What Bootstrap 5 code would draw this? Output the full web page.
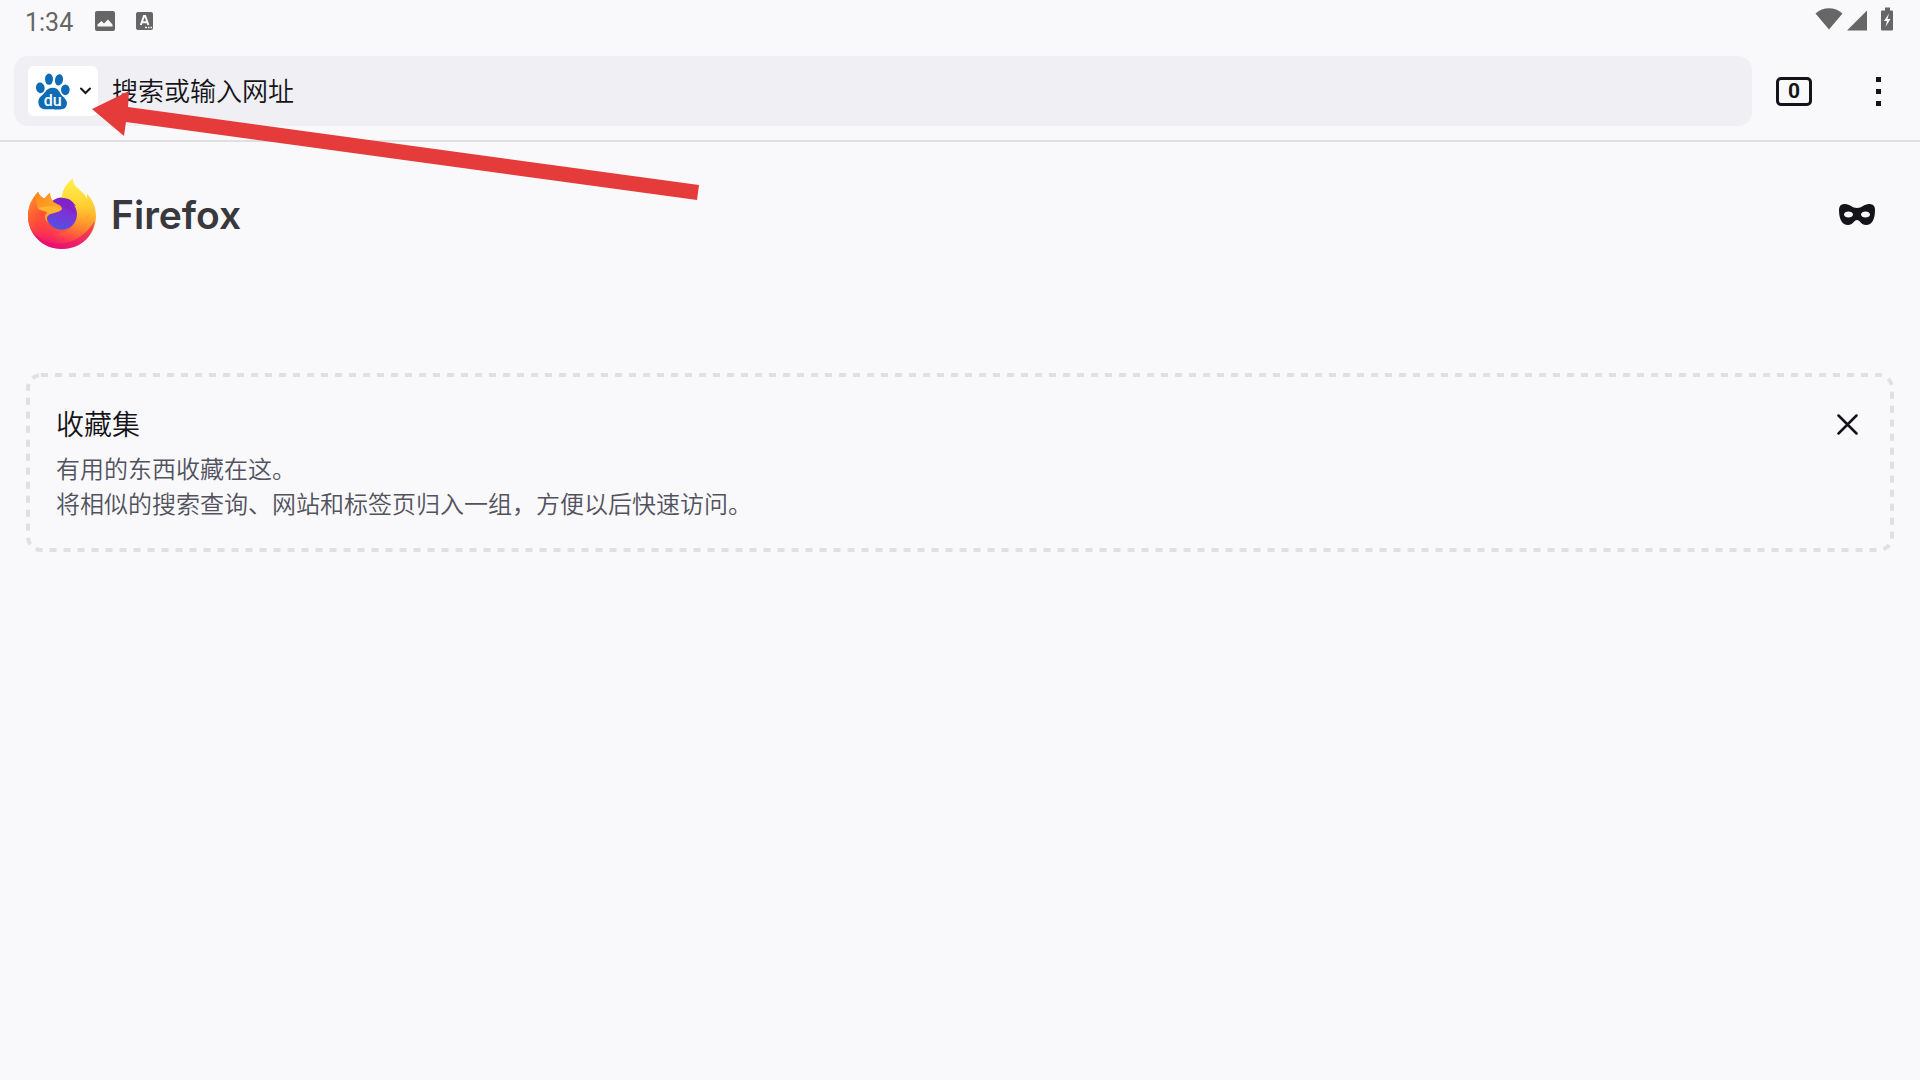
<!DOCTYPE html>
<html lang="zh-CN">
<head>
<meta charset="utf-8">
<meta name="viewport" content="width=device-width, initial-scale=1">
<title>Firefox</title>
<link href="https://cdn.jsdelivr.net/npm/bootstrap@5.3.0/dist/css/bootstrap.min.css" rel="stylesheet">
<style>
body{background:#f9f9fb;color:#15141a;font-family:Roboto,"Noto Sans CJK SC",sans-serif}
svg{display:block;flex:none}
.statusbar{height:42px;padding:0 26px 0 25px;color:#666;font-size:25px;line-height:42px}
.clock{padding-top:3px}
.notices{gap:21px;margin-left:22px}
.toolbar{padding:14px 27px 14px 14px;border-bottom:2px solid #e0e0e4}
.address{height:70px;padding:0 14px;border-radius:14px;background:#f0f0f4}
.engine{width:70px;height:50px;padding:0 7px 0 8px;border:0;border-radius:6px;background:#fff}
.url{margin-left:14px;border:0;background:transparent;padding:2px 0 0;font-size:26px;line-height:40px;font-weight:350;color:#15141a;outline:0}
.url::placeholder{color:#15141a;opacity:1}
.plain{border:0;background:transparent;padding:0;color:#15141a}
.tabs{width:36px;height:29px;margin-left:24px;border:3px solid #15141a;border-radius:5px;font:700 21px/23px Roboto,sans-serif}
.more{margin-left:51px;width:30px;height:44px}
.home{padding:35px 26px 0}
.wordmark{margin-left:13px;padding-top:2px;font-family:Inter,sans-serif;font-size:39px;line-height:44px;font-weight:600;color:#38383d}
.private{margin-right:19px}
.collection{margin-top:122px;height:179px;padding:36px 36px 0 30px}
.outline{left:0;top:0;width:100%;height:100%;overflow:visible}
.outline rect{x:2px;y:2px;width:calc(100% - 4px);height:calc(100% - 4px);fill:none;stroke:#e0e0e2;stroke-width:4px;stroke-dasharray:7 7}
.collection h2{font-size:28px;line-height:34px;font-weight:350;margin:0 0 10px}
.collection p{font-size:24px;line-height:35px;font-weight:350;color:#52525e;margin:0}
.dismiss{margin-top:5px}
.pointer{left:0;top:0;pointer-events:none}
</style>
</head>
<body>
<header>
<div class="statusbar d-flex align-items-center">
  <span class="clock">1:34</span>
  <div class="notices d-flex align-items-center">
    <svg width="20" height="20" viewBox="0 0 20 20"><rect width="20" height="20" rx="2" fill="#666"/><path d="M2.500 15.500v-2l4-3.500 2.500 2.500 4-4 4.500 5v2z" fill="#f9f9fb"/></svg>
    <svg width="17" height="18" viewBox="0 0 17 18"><rect width="17" height="18" rx="2" fill="#666"/><path d="M4.800 13 8 4h1.200l3.200 9M6.200 10.200h5" fill="none" stroke="#f9f9fb" stroke-width="2"/><path d="M9 15.500h2m1 0h1.500m1 0h1.500" stroke="#f9f9fb" stroke-width="1.500"/></svg>
  </div>
  <svg class="ms-auto mb-1" width="79" height="24" viewBox="0 0 79 24" fill="#666"><path d="M.5 6.500C8-.5 20-.5 27.500 6.500L14 22.500zM32 23.500 52 3.500v20z"/><path d="M70 .5h5v3h2q1 0 1 1v18q0 1-1 1H67q-1 0-1-1v-18q0-1 1-1h3z"/><path d="M74 6.500 69 14h3l-1.500 6 5-8H72.500z" fill="#f9f9fb"/></svg>
</div>
<div class="toolbar d-flex align-items-center">
  <div class="address d-flex align-items-center flex-grow-1">
    <button class="engine d-flex align-items-center justify-content-between" aria-label="百度">
      <svg width="34" height="37" viewBox="108 218 102 110" fill="#0d6cb5"><ellipse cx="121" cy="262" rx="13" ry="16" transform="rotate(-8 121 262)"/><ellipse cx="147" cy="236" rx="12" ry="17"/><ellipse cx="177" cy="238" rx="12" ry="17" transform="rotate(12 177 238)"/><ellipse cx="196" cy="268" rx="13" ry="16"/><path d="M158 262c-18 0-20 12-29 20-12 9-16 17-13 29 4 17 21 16 42 15 21 1 37 3 42-12 4-14-6-21-15-30-8-8-9-22-27-22z"/><text x="158" y="317" text-anchor="middle" font-family="Roboto,sans-serif" font-weight="500" font-size="48" fill="#fff">du</text></svg>
      <svg width="11" height="8" viewBox="0 0 11 8" fill="none" stroke="#15141a" stroke-width="2" stroke-linecap="round"><path d="m1 1.500 4.500 4.500L10 1.500"/></svg>
    </button>
    <input class="url flex-grow-1" type="text" aria-label="搜索或输入网址" placeholder="搜索或输入网址">
  </div>
  <button class="plain tabs" aria-label="标签页">0</button>
  <button class="plain more d-flex align-items-center justify-content-center" aria-label="菜单"><svg width="5" height="29" viewBox="0 0 5 29" fill="#15141a"><path d="M0 0h5v5H0zM0 12h5v5H0zM0 24h5v5H0z"/></svg></button>
</div>
</header>
<main class="home">
  <div class="d-flex align-items-center">
    <svg width="72" height="74" viewBox="6 9 216 222">
      <defs>
        <linearGradient id="flame" x1=".8" y1="0" x2=".3" y2="1"><stop offset="0" stop-color="#fff04f"/><stop offset=".3" stop-color="#ffc62e"/><stop offset=".55" stop-color="#ff802d"/><stop offset=".78" stop-color="#ff3c4b"/><stop offset="1" stop-color="#e9087c"/></linearGradient>
        <linearGradient id="tail" x1=".3" y1="0" x2=".4" y2="1"><stop offset="0" stop-color="#fff24d"/><stop offset=".5" stop-color="#ffcf32"/><stop offset="1" stop-color="#ff8430" stop-opacity="0"/></linearGradient>
        <linearGradient id="side" x1="0" y1="0" x2=".6" y2="1"><stop offset="0" stop-color="#ff9a24"/><stop offset=".5" stop-color="#ff5136"/><stop offset="1" stop-color="#ff2b52" stop-opacity="0"/></linearGradient>
        <linearGradient id="globe" x1=".7" y1="0" x2=".4" y2="1"><stop offset="0" stop-color="#8a1fc9"/><stop offset=".5" stop-color="#7a35d8"/><stop offset="1" stop-color="#4d54e2"/></linearGradient>
        <linearGradient id="head" x1="0" y1="0" x2="1" y2="1"><stop offset="0" stop-color="#ff8a1e"/><stop offset="1" stop-color="#ffb52c"/></linearGradient>
      </defs>
      <path d="M42 54c-19 20-30 45-30 72 0 55 44 99 101 99 58 0 103-42 103-99 0-25-10-49-27-65l1 16C180 49 148 45 146 15c-18 14-29 32-32 54L80 80l-2-24-17 18c-9-4-15-10-19-20z" fill="url(#flame)"/>
      <path d="M42 54c-19 20-30 45-30 72 0 38 22 69 53 86l40-50-32-90 5-16-17 18c-9-4-15-10-19-20z" fill="url(#side)"/>
      <path d="M146 15c-21 16-35 39-31 65l32 15c10 20 10 35 3 53-12 30-45 36-65 26 37 31 112 21 125-37 5-24-4-60-21-76l1 16C180 49 148 45 146 15z" fill="url(#tail)"/>
      <path d="M21 163c19 38 69 55 110 42 38-10 66-37 80-65-4 49-43 85-98 85-43 0-77-24-92-62z" fill="#e20a7a" opacity=".55"/>
      <circle cx="113" cy="121" r="46" fill="url(#globe)"/>
      <path d="M79 91c11-19 28-22 45-18 18 3 23 12 32 24-9-5-15-5-22-3 13 8 18 17 20 28-23-25-50-25-75-31z" fill="#8023c9"/>
      <path d="M42 54c4 10 10 16 19 20l17-18c0 11 5 22 11 29 13 8 23 7 25 20-7 11-23 10-36 16-13 7-10 17-6 25-14-10-9-25-3-31-7-4-21-4-28-13-6-20-9-33 1-48z" fill="url(#head)"/>
      <path d="M42 103c17-6 45-10 71 1-8 12-25 9-36 16-5-8-20-9-35-17z" fill="#ffb52f"/>
      <path d="M192 116c-5 20-17 27-27 36 13-3 26-10 31-25z" fill="#ffa42c" opacity=".6"/>
    </svg>
    <span class="wordmark">Firefox</span>
    <button class="plain private ms-auto" aria-label="隐私浏览"><svg width="36" height="21" viewBox="0 0 36 21"><path fill="#15141a" fill-rule="evenodd" d="M0 6C0 2 2 0 6 0c5 0 7 4 12 4S25 0 30 0c4 0 6 2 6 6 0 9-3 15-9 15-5 0-6-5-9-5s-4 5-9 5C3 21 0 15 0 6zm5 4.500c0 4 9 4 9 0s-9-4-9 0zm17 0c0 4 9 4 9 0s-9-4-9 0z"/></svg></button>
  </div>
  <section class="collection position-relative d-flex align-items-start justify-content-between">
    <svg class="outline position-absolute"><rect rx="13"/></svg>
    <div>
      <h2>收藏集</h2>
      <p>有用的东西收藏在这。<br>将相似的搜索查询、网站和标签页归入一组，方便以后快速访问。</p>
    </div>
    <button class="plain dismiss" aria-label="关闭"><svg width="21" height="21" viewBox="0 0 21 21" stroke="#15141a" stroke-width="2.500" stroke-linecap="round"><path d="m1.500 1.500 18 18m0-18-18 18"/></svg></button>
  </section>
</main>
<svg class="pointer position-absolute" width="700" height="202" viewBox="0 0 700 202"><path d="M92 109 129 91 128 107 699 185 697 200 126 122 124 136z" fill="#e53b3b"/></svg>
</body>
</html>
